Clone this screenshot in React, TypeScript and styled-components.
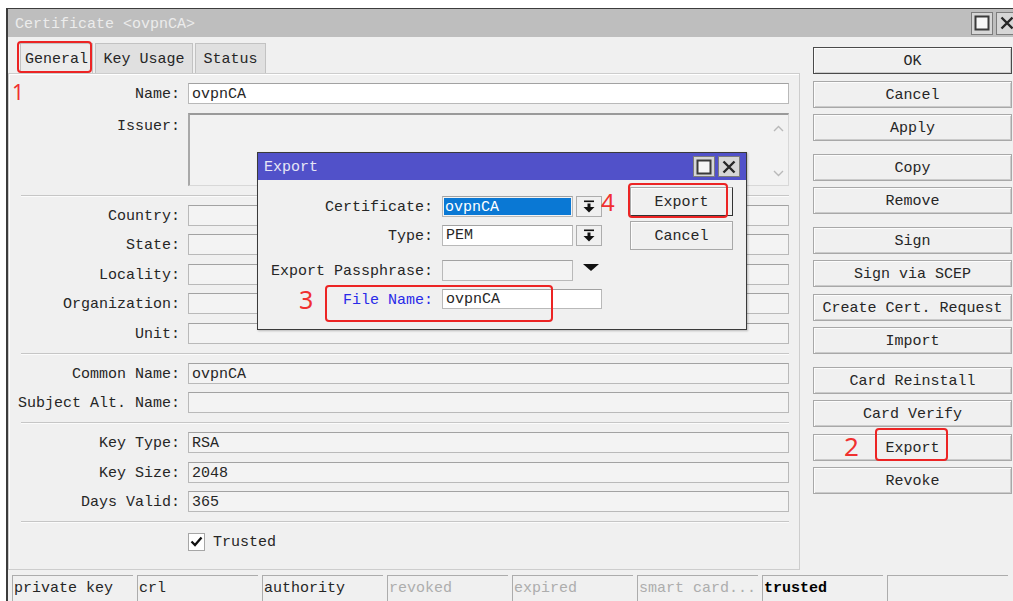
import React from 'react';
import styled, { createGlobalStyle } from 'styled-components';

const GlobalStyle = createGlobalStyle`
  html, body {
    margin: 0;
    padding: 0;
    background: #fff;
    overflow: hidden;
  }
  body {
    font-family: "Liberation Mono", "DejaVu Sans Mono", monospace;
    font-size: 15px;
    color: #262626;
  }
  * { box-sizing: border-box; }
`;

type Row = [string, string];

const subjectRows: Row[] = [
    ['Country', ''],
    ['State', ''],
    ['Locality', ''],
    ['Organization', ''],
    ['Unit', ''],
];

const nameRows: Row[] = [
    ['Common Name', 'ovpnCA'],
    ['Subject Alt. Name', ''],
];

const keyRows: Row[] = [
    ['Key Type', 'RSA'],
    ['Key Size', '2048'],
    ['Days Valid', '365'],
];

const buttonGroups = [
    ['OK', 'Cancel', 'Apply'],
    ['Copy', 'Remove'],
    ['Sign', 'Sign via SCEP', 'Create Cert. Request', 'Import'],
    ['Card Reinstall', 'Card Verify', 'Export', 'Revoke'],
];

const statusCells = [
    { text: 'private key' },
    { text: 'crl' },
    { text: 'authority' },
    { text: 'revoked', dim: true },
    { text: 'expired', dim: true },
    { text: 'smart card...', dim: true },
    { text: 'trusted', bold: true },
    { text: '' },
];

const tabs = [
    { label: 'General', width: 73, active: true },
    { label: 'Key Usage', width: 98 },
    { label: 'Status', width: 71 },
];

const CapButton = ({ kind, small }: { kind: 'max' | 'close'; small?: boolean }) => (
    <Cap $small={small}>
        <svg width="16" height="16" viewBox="0 0 16 16">
            {kind === 'max'
                ? <rect x="1.5" y="1.5" width="13" height="13" fill="#f6f6f6" stroke="#3a3a3a" strokeWidth="2"/>
                : <path d="M2.5 2.5 L13.5 13.5 M13.5 2.5 L2.5 13.5" stroke="#262626" strokeWidth="2.4"/>}
        </svg>
    </Cap>
);

const DropIcon = () => (
    <svg width="12" height="13" viewBox="0 0 12 13">
        <rect x="1" y="0.5" width="10" height="1.6" fill="#111"/>
        <rect x="4.5" y="3.5" width="3" height="3.5" fill="#111"/>
        <polygon points="0.5,7 11.5,7 6,12.5" fill="#111"/>
    </svg>
);

const Chevron = ({ up }: { up?: boolean }) => (
    <svg width="11" height="7" viewBox="0 0 11 7">
        <path d={up ? 'M1 6 L5.5 1.5 L10 6' : 'M1 1 L5.5 5.5 L10 1'} fill="none" stroke="#b9b9b9" strokeWidth="1.4"/>
    </svg>
);

const FieldRow = ({ label, value, white }: { label: string; value: string; white?: boolean }) => (
    <FormRow>
        <Label>{label}:</Label>
        <Field $white={white}>{value}</Field>
    </FormRow>
);

export default function App() {
    return (
        <>
            <GlobalStyle/>
            <Window>
                <TitleBar>
                    <TitleText>Certificate &lt;ovpnCA&gt;</TitleText>
                    <Caps>
                        <CapButton kind="max"/>
                        <CapButton kind="close"/>
                    </Caps>
                </TitleBar>

                <Body>
                    <LeftColumn>
                        <Tabs>
                            {tabs.map(t => (
                                <Tab key={t.label} $width={t.width} $active={t.active}>{t.label}</Tab>
                            ))}
                        </Tabs>
                        <Panel>
                            <Section>
                                <FieldRow label="Name" value="ovpnCA" white/>
                                <FormRow $top>
                                    <Label $top>Issuer:</Label>
                                    <IssuerBox>
                                        <ScrollTrack>
                                            <Chevron up/>
                                            <Chevron/>
                                        </ScrollTrack>
                                    </IssuerBox>
                                </FormRow>
                            </Section>
                            <Divider/>
                            <Section>
                                {subjectRows.map(([l, v]) => <FieldRow key={l} label={l} value={v}/>)}
                            </Section>
                            <Divider/>
                            <Section>
                                {nameRows.map(([l, v]) => <FieldRow key={l} label={l} value={v}/>)}
                            </Section>
                            <Divider/>
                            <Section>
                                {keyRows.map(([l, v]) => <FieldRow key={l} label={l} value={v}/>)}
                            </Section>
                            <Divider/>
                            <FormRow>
                                <span/>
                                <CheckRow>
                                    <CheckBox>
                                        <svg width="13" height="11" viewBox="0 0 13 11">
                                            <path d="M1.5 5.5 L5 9 L11.5 1.5" fill="none" stroke="#111" strokeWidth="2.3"/>
                                        </svg>
                                    </CheckBox>
                                    <CheckText>Trusted</CheckText>
                                </CheckRow>
                            </FormRow>
                        </Panel>
                    </LeftColumn>

                    <RightColumn>
                        {buttonGroups.map((group, i) => (
                            <ButtonGroup key={i}>
                                {group.map(b => <SideButton key={b} $default={b === 'OK'}>{b}</SideButton>)}
                            </ButtonGroup>
                        ))}
                    </RightColumn>
                </Body>

                <StatusBar>
                    {statusCells.map((c, i) => (
                        <StatusCell key={i} $dim={c.dim} $bold={c.bold}>{c.text}</StatusCell>
                    ))}
                </StatusBar>

                <Dialog>
                    <DialogTitle>
                        <TitleLabel>Export</TitleLabel>
                        <Caps $gap={3}>
                            <CapButton kind="max" small/>
                            <CapButton kind="close" small/>
                        </Caps>
                    </DialogTitle>
                    <DialogBody>
                        <DialogForm>
                            <DRow>
                                <DLabel>Certificate:</DLabel>
                                <DField><Selection>ovpnCA</Selection></DField>
                                <DropButton><DropIcon/></DropButton>
                            </DRow>
                            <DRow>
                                <DLabel>Type:</DLabel>
                                <DField $white>PEM</DField>
                                <DropButton><DropIcon/></DropButton>
                            </DRow>
                            <DRow $gap={14}>
                                <DLabel>Export Passphrase:</DLabel>
                                <DField/>
                                <TriangleSlot>
                                    <svg width="16" height="7" viewBox="0 0 16 7">
                                        <polygon points="0,0 16,0 8,7" fill="#111"/>
                                    </svg>
                                </TriangleSlot>
                            </DRow>
                            <DRow $height={20}>
                                <DLabel $link>File Name:</DLabel>
                                <DField $white $width={160}>ovpnCA</DField>
                            </DRow>
                        </DialogForm>
                        <DialogButtons>
                            <DialogButton $default>Export</DialogButton>
                            <DialogButton>Cancel</DialogButton>
                        </DialogButtons>
                    </DialogBody>

                    <Mark $x={67} $y={132} $w={228} $h={37}/>
                    <Num $x={41} $y={134} $size={25}>3</Num>
                    <Mark $x={370} $y={30} $w={100} $h={35}/>
                    <Num $x={343} $y={37} $size={24}>4</Num>
                </Dialog>

                <Mark $x={9} $y={32} $w={75} $h={32}/>
                <Num $x={4} $y={73} $size={21}>1</Num>
                <Mark $x={867} $y={419} $w={73} $h={33}/>
                <Num $x={836} $y={424} $size={26}>2</Num>
            </Window>
        </>
    );
}

const Window = styled.div`
  position: relative;
  margin: 8px 0 0 6px;
  width: 1014px;
  height: 600px;
  border-top: 1px solid #3c3c3c;
  border-left: 2px solid #3c3c3c;
  background: #f0f0f0;
  display: flex;
  flex-direction: column;
`

const TitleBar = styled.div`
  height: 28px;
  flex: none;
  background: #bebebe;
  display: flex;
  align-items: center;
  justify-content: space-between;
  padding: 0 2px 0 7px;
`

const TitleText = styled.span`
  color: #ececec;
  padding-top: 3px;
`

const Caps = styled.div<{ $gap?: number }>`
  display: flex;
  gap: ${p => p.$gap ?? 3}px;
`

const Cap = styled.div<{ $small?: boolean }>`
  width: 22px;
  height: ${p => p.$small ? 21 : 23}px;
  border: 1px solid #7c7c7c;
  background: #d6d6d6;
  display: flex;
  align-items: center;
  justify-content: center;
`

const Body = styled.div`
  display: flex;
  flex: none;
`

const LeftColumn = styled.div`
  width: 792px;
  padding-top: 6px;
`

const Tabs = styled.div`
  display: flex;
  gap: 2px;
  padding-left: 12px;
  height: 30px;
`

const Tab = styled.div<{ $width: number; $active?: boolean }>`
  width: ${p => p.$width}px;
  border: 1px solid #c2c2c2;
  border-bottom: none;
  padding-top: 2px;
  background: ${p => p.$active ? '#ececec' : '#e0e0e0'};
  display: flex;
  align-items: center;
  justify-content: center;
`

const Panel = styled.div`
  height: 497px;
  border: 1px solid #cdcdcd;
  box-shadow: inset 1px 1px 0 #fff;
  padding: 9px 10px 0 0;
`

const Section = styled.div`
  display: flex;
  flex-direction: column;
  gap: 8.5px;
`

const FormRow = styled.div<{ $top?: boolean }>`
  display: grid;
  grid-template-columns: 171px 1fr;
  column-gap: 8px;
  align-items: ${p => p.$top ? 'start' : 'center'};
`

const Label = styled.div<{ $top?: boolean }>`
  text-align: right;
  white-space: nowrap;
  padding-top: ${p => p.$top ? 5 : 2}px;
`

const Field = styled.div<{ $white?: boolean }>`
  height: 21px;
  line-height: 21px;
  padding-left: 3px;
  border: 1px solid #b9b9b9;
  border-top-color: #a2a2a2;
  background: ${p => p.$white ? '#fff' : '#f3f3f3'};
`

const IssuerBox = styled.div`
  height: 73px;
  border-top: 2px solid #9a9a9a;
  border-left: 2px solid #a8a8a8;
  border-right: 1px solid #d8d8d8;
  border-bottom: 1px solid #d8d8d8;
  background: #f2f2f2;
  display: flex;
  justify-content: flex-end;
`

const ScrollTrack = styled.div`
  width: 20px;
  display: flex;
  flex-direction: column;
  justify-content: space-between;
  align-items: center;
  padding: 10px 0 8px;
`

const Divider = styled.div`
  height: 2px;
  margin: 9px 0 8px 12px;
  border-top: 1px solid #c6c6c6;
  border-bottom: 1px solid #fbfbfb;
`

const CheckRow = styled.div`
  display: flex;
  align-items: center;
  gap: 8px;
  margin-top: 1px;
`

const CheckText = styled.span`
  padding-top: 2px;
`

const CheckBox = styled.div`
  width: 17px;
  height: 18px;
  border: 1px solid #a6a6a6;
  background: #fff;
  display: flex;
  align-items: center;
  justify-content: center;
`

const RightColumn = styled.div`
  width: 199px;
  margin-left: 13px;
  padding-top: 10px;
  display: flex;
  flex-direction: column;
  gap: 12.5px;
`

const ButtonGroup = styled.div`
  display: flex;
  flex-direction: column;
  gap: 6.5px;
`

const SideButton = styled.div<{ $default?: boolean }>`
  height: 27px;
  padding-top: 2px;
  border: 1px solid ${p => p.$default ? '#4a4a4a' : '#a8a8a8'};
  box-shadow: inset 1px 1px 0 #fcfcfc, inset -1px -1px 0 #cbcbcb;
  background: #f0f0f0;
  display: flex;
  align-items: center;
  justify-content: center;
  white-space: nowrap;
`

const StatusBar = styled.div`
  display: flex;
  gap: 4px;
  margin-top: 5px;
  padding-left: 4px;
`

const StatusCell = styled.div<{ $dim?: boolean; $bold?: boolean }>`
  width: 121px;
  height: 28px;
  flex: none;
  border-top: 1px solid #acacac;
  border-left: 1px solid #acacac;
  padding: 0 0 0 1px;
  line-height: 26px;
  white-space: nowrap;
  overflow: hidden;
  color: ${p => p.$dim ? '#adadad' : p.$bold ? '#000' : '#262626'};
  font-weight: ${p => p.$bold ? 'bold' : 'normal'};
`

const Dialog = styled.div`
  position: absolute;
  left: 249px;
  top: 143px;
  width: 490px;
  height: 178px;
  border: 1px solid #3a3a3a;
  background: #f0f0f0;
  box-shadow: 1px 1px 2px rgba(0, 0, 0, 0.25);
`

const DialogTitle = styled.div`
  height: 27px;
  background: #5151c9;
  color: #e6e6f6;
  display: flex;
  align-items: center;
  justify-content: space-between;
  padding: 0 6px 0 6px;
`

const TitleLabel = styled.span`
  padding-top: 2px;
`

const DialogBody = styled.div`
  display: flex;
`

const DialogForm = styled.div`
  padding-top: 16px;
  display: flex;
  flex-direction: column;
`

const DRow = styled.div<{ $gap?: number; $height?: number }>`
  display: flex;
  align-items: center;
  height: ${p => p.$height ?? 21}px;
  margin-top: ${p => p.$gap ?? 8}px;

  &:first-child {
    margin-top: 0;
  }
`

const DLabel = styled.div<{ $link?: boolean }>`
  width: 175px;
  margin-right: 9px;
  padding-top: 2px;
  text-align: right;
  white-space: nowrap;
  color: ${p => p.$link ? '#2a2ae8' : '#262626'};
`

const DField = styled.div<{ $white?: boolean; $width?: number }>`
  width: ${p => p.$width ?? 131}px;
  height: 100%;
  border: 1px solid #b9b9b9;
  border-top-color: #a2a2a2;
  background: ${p => p.$white ? '#fff' : '#f3f3f3'};
  padding: 0 0 0 3px;
  line-height: 20px;
  display: flex;
`

// highlighted value of the certificate picker
const Selection = styled.span`
  flex: 1;
  margin: 1px 1px 1px -2px;
  padding-left: 1px;
  line-height: 19px;
  background: #0a78d4;
  color: #fff;
`

const DropButton = styled.div`
  width: 26px;
  height: 100%;
  margin-left: 3px;
  border: 1px solid #adadad;
  background: #f0f0f0;
  display: flex;
  align-items: center;
  justify-content: center;
`

const TriangleSlot = styled.div`
  width: 26px;
  margin-left: 3px;
  padding: 4px 0 0 7px;
  align-self: flex-start;
  display: flex;
`

const DialogButtons = styled.div`
  width: 103px;
  margin-left: 28px;
  padding-top: 7px;
  display: flex;
  flex-direction: column;
  gap: 5px;
`

const DialogButton = styled.div<{ $default?: boolean }>`
  height: 29px;
  padding-top: 2px;
  border: 1px solid #a8a8a8;
  border-right-color: ${p => p.$default ? '#333' : '#a8a8a8'};
  border-bottom-color: ${p => p.$default ? '#333' : '#a8a8a8'};
  box-shadow: inset 1px 1px 0 #fcfcfc;
  background: #f0f0f0;
  display: flex;
  align-items: center;
  justify-content: center;
`

// red call-out frames and step numbers drawn over the dialogs
const Mark = styled.div<{ $x: number; $y: number; $w: number; $h: number }>`
  position: absolute;
  left: ${p => p.$x}px;
  top: ${p => p.$y}px;
  width: ${p => p.$w}px;
  height: ${p => p.$h}px;
  border: 2px solid #ec2424;
  border-radius: 4px;
  pointer-events: none;
`

const Num = styled.div<{ $x: number; $y: number; $size: number }>`
  position: absolute;
  left: ${p => p.$x}px;
  top: ${p => p.$y}px;
  font-family: "Noto Sans", "Liberation Sans", sans-serif;
  font-size: ${p => p.$size}px;
  line-height: 1;
  color: #f03030;
`
